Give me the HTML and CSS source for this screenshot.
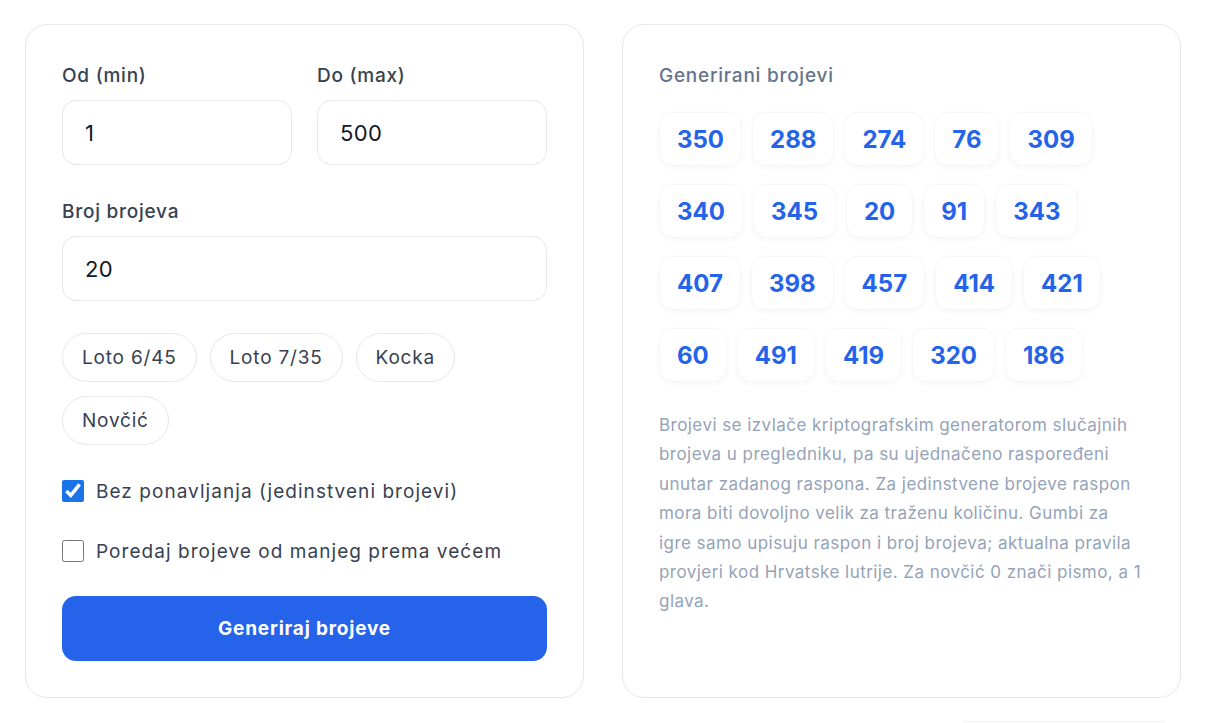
FILE: index.html
```html
<!DOCTYPE html>
<html lang="hr">
<head>
  <meta charset="UTF-8" />
  <meta name="viewport" content="width=device-width, initial-scale=1.0"/>
  <title>Generator slučajnih brojeva</title>
  <link rel="stylesheet" href="styles.css">
</head>
<body>
  <div class="layout">
    <div class="card form-card">
      <div class="row">
        <label class="field">
          <span class="label">Od (min)</span>
          <input type="text" class="input" value="1" />
        </label>
        <label class="field">
          <span class="label">Do (max)</span>
          <input type="text" class="input" value="500" />
        </label>
      </div>

      <label class="field">
        <span class="label">Broj brojeva</span>
        <input type="text" class="input" value="20" />
      </label>

      <div class="presets">
        <button class="chip">Loto 6/45</button>
        <button class="chip">Loto 7/35</button>
        <button class="chip">Kocka</button>
        <button class="chip">Novčić</button>
      </div>

      <label class="check">
        <input type="checkbox" checked />
        <span>Bez ponavljanja (jedinstveni brojevi)</span>
      </label>

      <label class="check">
        <input type="checkbox" />
        <span>Poredaj brojeve od manjeg prema većem</span>
      </label>

      <button class="primary">Generiraj brojeve</button>
    </div>

    <div class="card result-card">
      <div class="result-title">Generirani brojevi</div>
      <div class="numbers">
        <span class="num">350</span>
        <span class="num">288</span>
        <span class="num">274</span>
        <span class="num">76</span>
        <span class="num">309</span>
        <span class="num">340</span>
        <span class="num">345</span>
        <span class="num">20</span>
        <span class="num">91</span>
        <span class="num">343</span>
        <span class="num">407</span>
        <span class="num">398</span>
        <span class="num">457</span>
        <span class="num">414</span>
        <span class="num">421</span>
        <span class="num">60</span>
        <span class="num">491</span>
        <span class="num">419</span>
        <span class="num">320</span>
        <span class="num">186</span>
      </div>
      <p class="note">
        Brojevi se izvlače kriptografskim generatorom slučajnih brojeva u pregledniku, pa su ujednačeno raspoređeni unutar zadanog raspona. Za jedinstvene brojeve raspon mora biti dovoljno velik za traženu količinu. Gumbi za igre samo upisuju raspon i broj brojeva; aktualna pravila provjeri kod Hrvatske lutrije. Za novčić 0 znači pismo, a 1 glava.
      </p>
    </div>
  </div>

  <div class="below">
    <div class="below-box"></div>
  </div>
</body>
</html>
```

FILE: styles.css
```css
body {
  margin: 0;
  background: #fff;
  font-family: Inter, 'Noto Sans', sans-serif;
  color: #374151;
}
.layout {
  display: grid;
  grid-template-columns: 559px 559px;
  gap: 38px;
  padding: 24px 0 0 25px;
}
.card {
  background: #fff;
  border: 1px solid #e5e7eb;
  border-radius: 22px;
  padding: 36px;
}
.form-card {
  display: flex;
  flex-direction: column;
  gap: 32px;
}
.row {
  display: grid;
  grid-template-columns: 1fr 1fr;
  gap: 25px;
}
.field {
  display: flex;
  flex-direction: column;
  gap: 9px;
  min-width: 0;
}
.label {
  font-size: 19px;
  font-weight: 500;
  line-height: 30px;
  letter-spacing: 0.75px;
  color: #374151;
}
.input {
  width: 100%;
  min-width: 0;
  height: 65px;
  box-sizing: border-box;
  border: 1px solid #e5e7eb;
  border-radius: 14px;
  padding: 0 22px;
  font-family: inherit;
  font-size: 22px;
  letter-spacing: 0.4px;
  color: #111827;
  background: #fff;
  outline: none;
}
.presets {
  display: flex;
  flex-wrap: wrap;
  gap: 14px 13px;
}
.chip {
  height: 49px;
  padding: 0 19px;
  border: 1px solid #e5e7eb;
  border-radius: 999px;
  background: #fff;
  font-family: inherit;
  font-size: 19px;
  letter-spacing: 0.8px;
  color: #374151;
  cursor: pointer;
}
.check {
  display: flex;
  align-items: center;
  gap: 12px;
  height: 28px;
  font-size: 19px;
  letter-spacing: 1.05px;
  color: #374151;
}
.check input {
  width: 22px;
  height: 22px;
  margin: 0;
  accent-color: #1a73e8;
}
.primary {
  height: 65px;
  border: none;
  border-radius: 14px;
  background: #2563eb;
  color: #fff;
  font-family: inherit;
  font-size: 19px;
  font-weight: 700;
  letter-spacing: 0.8px;
  cursor: pointer;
  margin-top: -1px;
}
.result-title {
  font-size: 19px;
  font-weight: 500;
  line-height: 30px;
  letter-spacing: 0.75px;
  color: #64748b;
}
.numbers {
  display: flex;
  flex-wrap: wrap;
  gap: 18px 10px;
  margin-top: 21px;
}
.num {
  box-sizing: border-box;
  height: 54px;
  padding: 0 17px;
  display: flex;
  align-items: center;
  border-radius: 14px;
  background: #fff;
  border: 1px solid #f6f7f9;
  box-shadow: 0 2px 6px rgba(15, 23, 42, 0.035);
  font-size: 24px;
  font-weight: 700;
  color: #2563eb;
}
.note {
  margin: 29px 0 0;
  font-size: 17px;
  line-height: 29.4px;
  letter-spacing: 0.45px;
  color: #94a3b8;
}
.below {
  display: flex;
  justify-content: flex-end;
  padding: 23px 38px 0 0;
}
.below-box {
  width: 208px;
  height: 20px;
  border-top: 1px solid #eef0f3;
  border-radius: 8px 8px 0 0;
}
```
